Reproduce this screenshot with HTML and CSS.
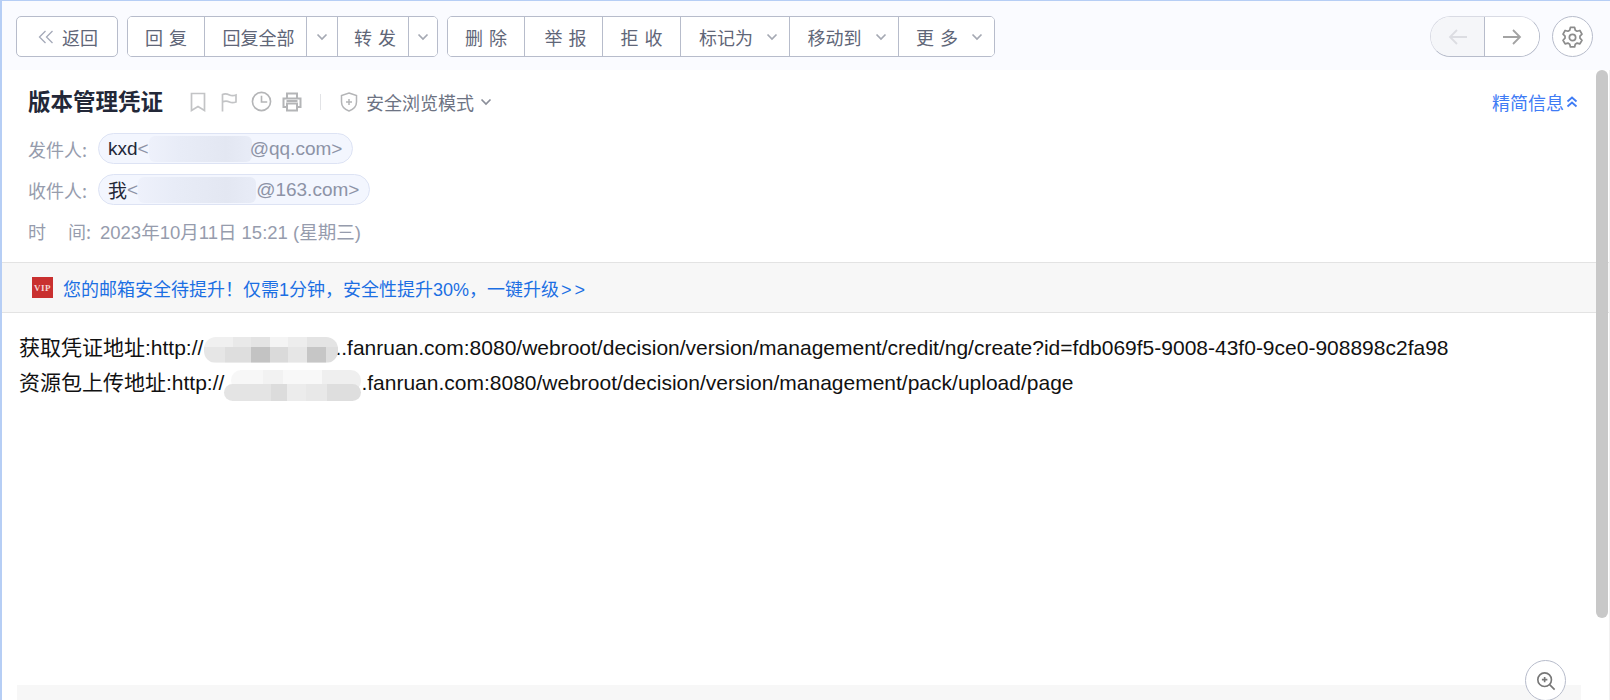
FILE: index.html
```html
<!DOCTYPE html>
<html lang="zh-CN">
<head>
<meta charset="utf-8">
<title>版本管理凭证</title>
<link rel="stylesheet" href="styles.css">
</head>
<body>
<div class="window">
  <header class="toolbar">
    <button class="btn single back"><svg class="dbl" viewBox="0 0 16 14"><path d="M7.500 1 1.500 7l6 6M14.500 1l-6 6 6 6"/></svg>返回</button>
    <div class="group">
      <button class="btn w-reply">回 复</button>
      <button class="btn w-replyall">回复全部</button>
      <button class="btn w-arrow-a"><svg class="chev" viewBox="0 0 12 8"><path d="M1.500 1.500 6 6l4.500-4.500"/></svg></button>
      <button class="btn w-fwd">转 发</button>
      <button class="btn w-arrow-b"><svg class="chev" viewBox="0 0 12 8"><path d="M1.500 1.500 6 6l4.500-4.500"/></svg></button>
    </div>
    <div class="group">
      <button class="btn w-del">删 除</button>
      <button class="btn w-rep">举 报</button>
      <button class="btn w-rej">拒 收</button>
      <button class="btn w-mark">标记为<svg class="chev ml" viewBox="0 0 12 8"><path d="M1.500 1.500 6 6l4.500-4.500"/></svg></button>
      <button class="btn w-move">移动到<svg class="chev ml" viewBox="0 0 12 8"><path d="M1.500 1.500 6 6l4.500-4.500"/></svg></button>
      <button class="btn w-more">更 多<svg class="chev ml" viewBox="0 0 12 8"><path d="M1.500 1.500 6 6l4.500-4.500"/></svg></button>
    </div>
    <div class="spacer"></div>
    <div class="nav">
      <button class="nav-btn prev"><svg viewBox="0 0 20 16"><path d="M9 1 2 8l7 7M2 8h17"/></svg></button>
      <button class="nav-btn next"><svg viewBox="0 0 20 16"><path d="M11 1l7 7-7 7M18 8H1"/></svg></button>
    </div>
    <button class="gear"><svg viewBox="0 0 24 24"><path d="M9.800 2.500h4.400l.7 2.900 1.900 1.100 2.900-.8 2.200 3.800-2.100 2.100v2.200l2.100 2.100-2.200 3.800-2.900-.8-1.900 1.100-.7 2.900H9.800l-.7-2.900-1.900-1.100-2.900.8-2.200-3.800 2.100-2.100v-2.200L2.100 9.500l2.200-3.800 2.900.8 1.900-1.100z"/><circle cx="12" cy="13" r="3.300"/></svg></button>
  </header>

  <main class="mail">
    <section class="head">
      <div class="title-row">
        <h1 class="title">版本管理凭证</h1>
        <svg class="tool t-book" viewBox="0 0 16 20"><path d="M1.500 1.500h13v17L8 14.500l-6.500 4z"/></svg>
        <svg class="tool t-flag" viewBox="0 0 16 20"><path d="M1.500 19.500V2.500c3-1.500 5-.5 7 .5s4 1 6.500 0v7c-2.500 1-4.500 1-6.500 0s-4-1.500-7 0"/></svg>
        <svg class="tool t-clock" viewBox="0 0 22 22"><circle cx="11" cy="11" r="9.500"/><path d="M11 5v6.500h6"/></svg>
        <svg class="tool t-print" viewBox="0 0 20 20"><path d="M5 6V1.500h10V6M5 15H1.500V6.500h17V15H15M5 11.500h10v7H5zM4.500 9h11"/></svg>
        <i class="vsep"></i>
        <svg class="shield" viewBox="0 0 18 20"><path d="M9 1l7.500 2.500v6.500c0 4.500-3.500 7.500-7.500 9-4-1.500-7.500-4.500-7.500-9V3.500zM9 7v6M6 10h6"/></svg>
        <span class="safe">安全浏览模式</span>
        <svg class="chev safe-chev" viewBox="0 0 12 8"><path d="M1.500 1.500 6 6l4.500-4.500"/></svg>
        <a class="brief">精简信息<svg viewBox="0 0 12 12"><path d="M1.500 5.500 6 1.500l4.500 4M1.500 10.500 6 6.500l4.500 4"/></svg></a>
      </div>
      <div class="meta-row">
        <span class="label">发件人:</span>
        <span class="chip"><b>kxd</b>&lt;<i class="mask m-from"></i>@qq.com&gt;</span>
      </div>
      <div class="meta-row">
        <span class="label">收件人:</span>
        <span class="chip"><b>我</b>&lt;<i class="mask m-to"></i>@163.com&gt;</span>
      </div>
      <div class="meta-row time-row">
        <span class="label spread"><span>时</span><span>间:</span></span>
        <span class="time">2023年10月11日 15:21 (星期三)</span>
      </div>
    </section>

    <section class="banner">
      <svg class="vip" viewBox="0 0 21 21"><rect width="21" height="21" fill="#c9302f"/><text x="10.500" y="14">VIP</text></svg>
      <a class="banner-link">您的邮箱安全待提升！仅需1分钟，安全性提升30%，一键升级<span class="gt">&gt;&gt;</span></a>
    </section>

    <section class="body-text">
      <p>获取凭证地址:http://<i class="blur b-one"></i>..fanruan.com:8080/webroot/decision/version/management/credit/ng/create?id=fdb069f5-9008-43f0-9ce0-908898c2fa98</p>
      <p>资源包上传地址:http://<i class="blur b-two"></i>.fanruan.com:8080/webroot/decision/version/management/pack/upload/page</p>
    </section>

    <div class="foot"></div>
    <button class="zoom-btn"><svg viewBox="0 0 22 22"><circle cx="9.500" cy="9.500" r="7.500"/><path d="M15 15l5.500 5.500M9.500 6.500v6M6.500 9.500h6"/></svg></button>
    <div class="scroll-thumb"></div>
  </main>
</div>
</body>
</html>
```

FILE: styles.css
```css
* { box-sizing: border-box; }
html, body { margin: 0; padding: 0; height: 100%; overflow: hidden; }
body { font-family: "Noto Sans CJK SC", "Liberation Sans", sans-serif; background: #fff; }
button { font: inherit; margin: 0; }

.window { width: 1610px; height: 700px; border-top: 1px solid #b6cef5; border-left: 2px solid #b6cef5; display: flex; flex-direction: column; }

.toolbar { height: 69px; flex: none; background: #fafbff; display: flex; align-items: center; padding: 2px 17px 0 14px; gap: 9px; }
.spacer { flex: 1; }
.btn { height: 41px; border: 0; border-right: 1px solid #b7bccb; background: #fff; color: #5f6678; font-size: 18px; word-spacing: 2px; padding: 0; display: flex; align-items: center; justify-content: center; flex: none; white-space: pre; }
.btn:last-child { border-right: 0; }
.single { border: 1px solid #b7bccb; border-radius: 5px; }
.back { width: 102px; padding-left: 2px; }
.dbl { width: 16px; height: 14px; fill: none; stroke: #a4a9b8; stroke-width: 1.300; margin-right: 8px; }
.group { display: flex; border: 1px solid #b7bccb; border-radius: 5px; height: 41px; overflow: hidden; background: #fff; }
.group .btn { height: 39px; }
.w-reply { width: 77px; }
.w-replyall { width: 102px; padding-left: 6px; }
.w-arrow-a { width: 31px; }
.w-fwd { width: 71px; padding-left: 4px; }
.w-arrow-b { width: 28px; }
.w-del { width: 77px; }
.w-rep { width: 78px; padding-left: 4px; }
.w-rej { width: 78px; }
.w-mark { width: 109px; padding-left: 7px; }
.w-move { width: 109px; padding-left: 6px; }
.w-more { width: 95px; padding-left: 6px; }
.chev { width: 12px; height: 8px; fill: none; stroke: #a5a9b3; stroke-width: 1.700; flex: none; }
.ml { margin-left: 13px; }

.nav { display: flex; width: 110px; height: 41px; border: 1px solid #b7bccb; border-color: #d9dbe4 #b7bccb #b7bccb #d9dbe4; border-radius: 21px; overflow: hidden; background: #fff; }
.nav-btn { border: 0; padding: 0; background: #fff; display: flex; align-items: center; justify-content: center; }
.nav-btn svg { width: 20px; height: 16px; fill: none; stroke-width: 1.800; }
.prev { width: 54px; background: #f5f6f9; border-right: 1px solid #b7bccb; }
.prev svg { stroke: #dcdde2; }
.next { flex: 1; }
.next svg { stroke: #a3a3a3; }
.gear { width: 41px; height: 41px; border-radius: 50%; border: 1px solid #b7bccb; background: #fff; padding: 0; margin-left: 3px; display: flex; align-items: center; justify-content: center; }
.gear svg { width: 23px; height: 23px; fill: none; stroke: #8c8c8c; stroke-width: 1.800; stroke-linejoin: round; }

.mail { position: relative; flex: 1; overflow: hidden; display: flex; flex-direction: column; border-right: 1px solid #f1f1f1; }
.head { height: 192px; padding: 10px 31px 0 26px; flex: none; }
.title-row { display: flex; align-items: center; height: 43px; }
.title { margin: -4px 0 0; font-size: 22.500px; line-height: 30px; font-weight: 700; color: #232838; }
.tool { flex: none; fill: none; stroke: #c3c4c6; stroke-width: 1.700; }
.t-book { width: 16px; height: 20px; margin-left: 27px; }
.t-flag { width: 16px; height: 20px; margin-left: 15px; }
.t-clock { width: 21px; height: 21px; margin-left: 14px; stroke: #b4b5b7; }
.t-print { width: 20px; height: 20px; margin-left: 10px; stroke: #b4b5b7; stroke-width: 2; }
.vsep { width: 1px; height: 16px; background: #e2e3e6; margin-left: 18px; }
.shield { width: 18px; height: 20px; margin-left: 19px; fill: none; stroke: #b4b5b7; stroke-width: 1.500; flex: none; }
.safe { margin-left: 8px; font-size: 18px; color: #6d7383; }
.safe-chev { margin-left: 6px; stroke: #8a8e99; }
.brief { margin-left: auto; color: #3f7cf5; font-size: 18px; display: flex; align-items: center; }
.brief svg { width: 12px; height: 12px; fill: none; stroke: #3f7cf5; stroke-width: 1.800; margin-left: 2px; }

.meta-row { display: flex; align-items: center; height: 31px; margin-top: 10px; font-size: 18px; color: #969cad; }
.label { width: 70px; flex: none; }
.spread { display: flex; justify-content: space-between; width: 63px; margin-right: 9px; }
.chip { display: inline-flex; align-items: center; height: 31px; padding: 0 10px 0 9px; border: 1px solid #dde3f4; border-radius: 16px; background: #f3f6fe; color: #8d93a6; font-family: "Liberation Sans", "Noto Sans CJK SC", sans-serif; font-size: 19px; white-space: pre; }
.chip b { font-weight: 400; color: #232838; }
.mask { display: inline-block; height: 26px; border-radius: 6px; background: linear-gradient(90deg, #eef1fb, #e8ecf7 30%, #e3e7f2 75%, #e8ecf7); }
.m-from { width: 103px; margin-right: -2px; }
.m-to { width: 118px; }
.time { font-size: 18.500px; color: #969cad; font-family: "Liberation Sans", "Noto Sans CJK SC", sans-serif; }

.banner { height: 51px; flex: none; display: flex; align-items: center; background: #f7f7f7; border-top: 1px solid #e3e3e3; border-bottom: 1px solid #e3e3e3; padding-left: 30px; }
.vip { width: 21px; height: 21px; margin-right: 10px; flex: none; }
.vip text { font-family: "Liberation Serif", serif; font-size: 9px; font-weight: 700; fill: #f5d5d5; text-anchor: middle; letter-spacing: .5px; }
.banner-link { color: #1c6fe3; font-size: 18px; font-family: "Liberation Sans", "Noto Sans CJK SC", sans-serif; white-space: nowrap; }
.gt { letter-spacing: 3px; margin-left: 2px; }

.body-text { padding: 17px 0 0 17px; font-family: "Liberation Sans", "Noto Sans CJK SC", sans-serif; font-size: 21px; color: #111; }
.body-text p { margin: 0; line-height: 35px; height: 35px; white-space: nowrap; }
.blur { display: inline-block; position: relative; vertical-align: -8px; }
.b-one { width: 134px; height: 26px; margin: 0 -3px 0 1px; border-radius: 12px; background:
  linear-gradient(90deg, #f0f0f0 0 22%, #e9e9e9 22% 35%, #e4e4e4 35% 49%, #f4f4f4 49% 63%, #ededed 63% 77%, #e4e4e4 77% 100%) top / 100% 40% no-repeat,
  linear-gradient(90deg, #e6e6e6 0 16%, #dedede 16% 35%, #c3c3c3 35% 49%, #dadada 49% 63%, #e6e6e6 63% 77%, #c6c6c6 77% 91%, #dedede 91% 100%) bottom / 100% 60% no-repeat; }
.b-two { width: 137px; height: 31px; vertical-align: -11px; }
.b-two::before { content: ""; position: absolute; left: 7px; right: 0; top: 0; height: 21px; border-radius: 10px; background: linear-gradient(90deg, #f7f7f7 0 25%, #f2f2f2 25% 40%, #f8f8f8 40% 70%, #efefef 70% 100%); }
.b-two::after { content: ""; position: absolute; left: 0; right: 0; top: 14px; height: 17px; border-radius: 9px; background: linear-gradient(90deg, #e4e4e4 0 34%, #dcdcdc 34% 46%, #ececec 46% 60%, #e8e8e8 60% 75%, #dedede 75% 100%); }

.foot { position: absolute; left: 15px; right: 28px; bottom: 0; height: 15px; background: #f7f7f7; }
.zoom-btn { position: absolute; right: 43px; bottom: -1px; width: 41px; height: 41px; border-radius: 50%; border: 1px solid #b7bccb; background: #fff; padding: 0; display: flex; align-items: center; justify-content: center; }
.zoom-btn svg { width: 20px; height: 20px; fill: none; stroke: #777; stroke-width: 1.800; }
.scroll-thumb { position: absolute; top: 0; right: 1px; width: 12px; height: 548px; border-radius: 6px; background: #c8c8c8; }
```
